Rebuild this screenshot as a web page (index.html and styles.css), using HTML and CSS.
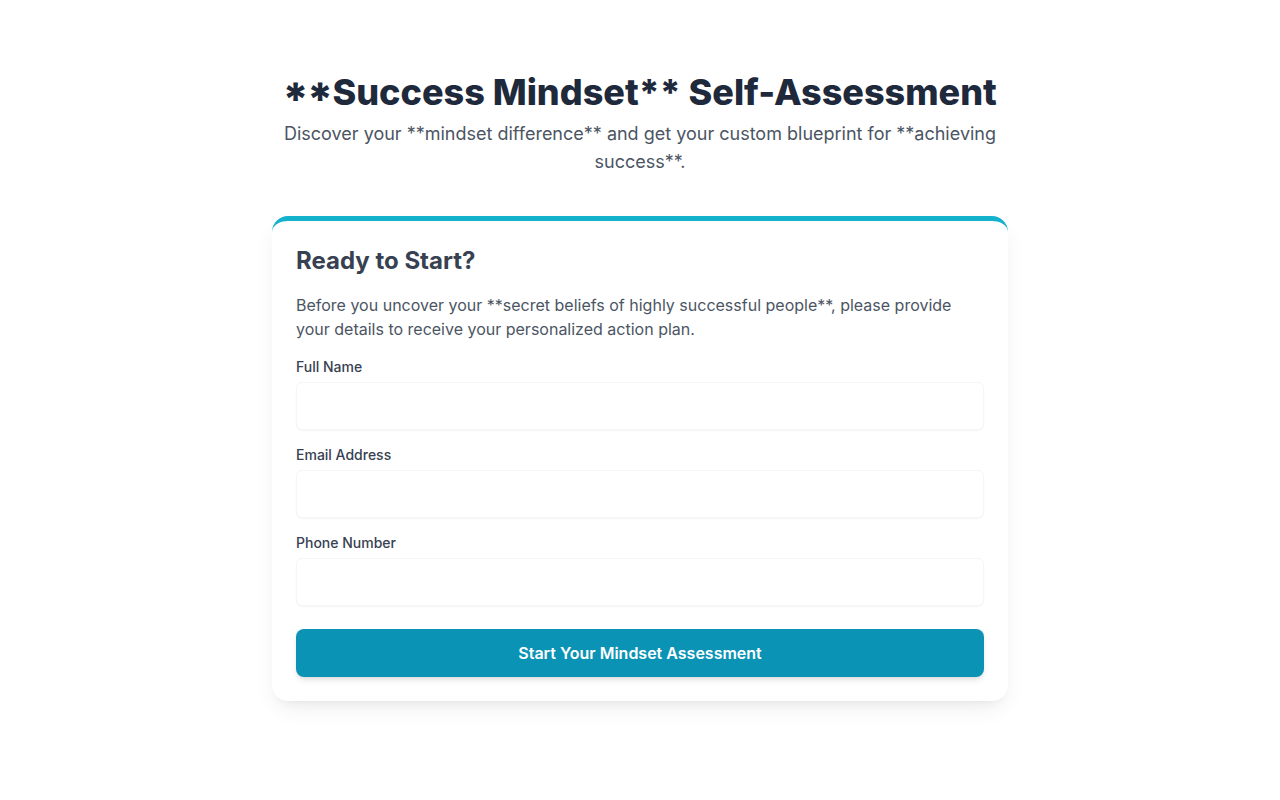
FILE: index.html
```html
<!DOCTYPE html>
<html lang="en">
<head>
<meta charset="utf-8">
<title>Success Mindset Self-Assessment</title>
<link rel="stylesheet" href="styles.css">
</head>
<body>
<main class="container">
  <header class="intro">
    <h1 class="intro-title"><span class="cap-mark">**</span>Success Mindset** Self-Assessment</h1>
    <p class="intro-sub">Discover your **mindset difference** and get your custom blueprint for **achieving success**.</p>
  </header>
  <section class="card">
    <h2 class="card-title">Ready to Start?</h2>
    <p class="card-text">Before you uncover your **secret beliefs of highly successful people**, please provide your details to receive your personalized action plan.</p>
    <form class="form">
      <div class="field">
        <label class="label" for="name">Full Name</label>
        <input class="input" id="name" type="text">
      </div>
      <div class="field">
        <label class="label" for="email">Email Address</label>
        <input class="input" id="email" type="email">
      </div>
      <div class="field">
        <label class="label" for="phone">Phone Number</label>
        <input class="input" id="phone" type="tel">
      </div>
      <button class="btn" type="button">Start Your Mindset Assessment</button>
    </form>
  </section>
</main>
</body>
</html>
```

FILE: styles.css
```css
* { box-sizing: border-box; }
html, body { margin: 0; padding: 0; background: #ffffff; }
body {
  font-family: Inter, "Noto Sans", "Liberation Sans", sans-serif;
  color: #1f2937;
}
.container {
  max-width: 768px;
  margin: 0 auto;
  padding: 72px 16px 40px;
}
.intro { text-align: center; }
.intro-title {
  margin: 0;
  font-size: 36px;
  line-height: 40px;
  font-weight: 800;
  color: #1e293b;
}
.cap-mark { font-feature-settings: "case" 1; }
.intro-sub {
  margin: 8px 0 0;
  font-size: 18px;
  line-height: 28px;
  color: #4b5563;
}
.card {
  margin-top: 40px;
  background: #fff;
  border-top: 5px solid #13b1cc;
  border-radius: 16px;
  padding: 24px;
  box-shadow: 0 10px 25px -5px rgba(0,0,0,0.08), 0 8px 10px -6px rgba(0,0,0,0.05);
}
.card-title {
  margin: 0;
  font-size: 24px;
  line-height: 32px;
  font-weight: 700;
  color: #374151;
}
.card-text {
  margin: 16px 0 0;
  font-size: 16px;
  line-height: 24px;
  color: #4b5563;
}
.form { margin-top: 16px; display: flex; flex-direction: column; }
.field { display: flex; flex-direction: column; margin-bottom: 15px; }
.label {
  font-size: 14px;
  line-height: 20px;
  font-weight: 500;
  color: #374151;
  margin-bottom: 5px;
}
.input {
  height: 48px;
  border: 1px solid #f5f6f7;
  border-radius: 6px;
  background: #fff;
  box-shadow: 0 1px 2px rgba(0,0,0,0.04);
  font: inherit;
  padding: 0 12px;
  outline: none;
}
.btn {
  margin-top: 8px;
  height: 48px;
  border: none;
  border-radius: 8px;
  background: #0a93b5;
  color: #fff;
  font-family: inherit;
  font-size: 16px;
  font-weight: 600;
  box-shadow: 0 4px 6px -1px rgba(0,0,0,0.1), 0 2px 4px -2px rgba(0,0,0,0.1);
  cursor: pointer;
}
```
